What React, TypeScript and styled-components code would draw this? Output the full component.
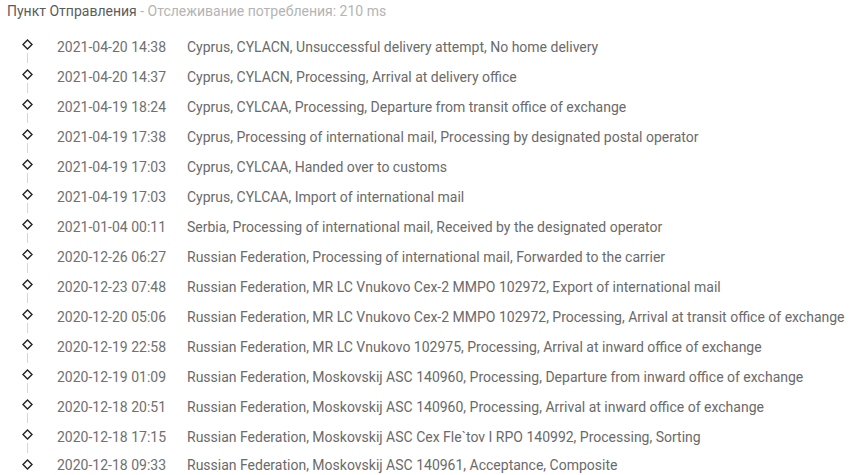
import { FC } from "react";
import styled, { createGlobalStyle } from "styled-components";

const GlobalStyle = createGlobalStyle`
  body {
    margin: 0;
    background: #ffffff;
    font-family: Roboto, "Liberation Sans", Arial, sans-serif;
  }
`;

const Page = styled.div`
  width: 863px;
  height: 475px;
  overflow: hidden;
  background: #fff;
`;

const Title = styled.div`
  padding: 3px 7px 0;
  height: 30px;
  box-sizing: border-box;
  font-size: 14px;
  line-height: 17px;
  color: #5c5c5c;

  & .muted {
    color: #b4b4b4;
  }
`;

const List = styled.ul`
  list-style: none;
  margin: 0;
  padding: 0;
`;

const Row = styled.li`
  display: grid;
  grid-template-columns: 57px 130px 1fr;
  height: 30px;
  align-items: center;
  font-size: 14px;
  white-space: nowrap;
`;

const Marker = styled.div<{ last?: boolean }>`
  align-self: stretch;
  display: flex;
  flex-direction: column;
  align-items: center;
  padding-top: 9px;
  padding-right: 2px;

  & svg {
    display: block;
    flex: none;
  }

  &::after {
    content: "";
    display: ${(p) => (p.last ? "none" : "block")};
    width: 1px;
    height: 10px;
    margin-top: 3px;
    background: #d6d6d6;
  }
`;

const Date = styled.span`
  color: #707070;
`;

const Text = styled.span`
  color: #6a6a6a;
`;

const Diamond: FC = () => (
  <svg width="11" height="11" viewBox="0 0 11 11">
    <polygon
      points="5.5,1 10,5.5 5.5,10 1,5.5"
      fill="#fff"
      stroke="#222"
      strokeWidth="1.4"
    />
  </svg>
);

const events: [string, string][] = [
  ["2021-04-20 14:38", "Cyprus, CYLACN, Unsuccessful delivery attempt, No home delivery"],
  ["2021-04-20 14:37", "Cyprus, CYLACN, Processing, Arrival at delivery office"],
  ["2021-04-19 18:24", "Cyprus, CYLCAA, Processing, Departure from transit office of exchange"],
  ["2021-04-19 17:38", "Cyprus, Processing of international mail, Processing by designated postal operator"],
  ["2021-04-19 17:03", "Cyprus, CYLCAA, Handed over to customs"],
  ["2021-04-19 17:03", "Cyprus, CYLCAA, Import of international mail"],
  ["2021-01-04 00:11", "Serbia, Processing of international mail, Received by the designated operator"],
  ["2020-12-26 06:27", "Russian Federation, Processing of international mail, Forwarded to the carrier"],
  ["2020-12-23 07:48", "Russian Federation, MR LC Vnukovo Cex-2 MMPO 102972, Export of international mail"],
  ["2020-12-20 05:06", "Russian Federation, MR LC Vnukovo Cex-2 MMPO 102972, Processing, Arrival at transit office of exchange"],
  ["2020-12-19 22:58", "Russian Federation, MR LC Vnukovo 102975, Processing, Arrival at inward office of exchange"],
  ["2020-12-19 01:09", "Russian Federation, Moskovskij ASC 140960, Processing, Departure from inward office of exchange"],
  ["2020-12-18 20:51", "Russian Federation, Moskovskij ASC 140960, Processing, Arrival at inward office of exchange"],
  ["2020-12-18 17:15", "Russian Federation, Moskovskij ASC Cex Fle`tov I RPO 140992, Processing, Sorting"],
  ["2020-12-18 09:33", "Russian Federation, Moskovskij ASC 140961, Acceptance, Composite"],
];

const App: FC = () => {
  return (
    <Page>
      <GlobalStyle />
      <Title>
        Пункт Отправления <span className="muted">- Отслеживание потребления: 210 ms</span>
      </Title>
      <List>
        {events.map(([date, text], i) => (
          <Row key={i}>
            <Marker last={i === events.length - 1}>
              <Diamond />
            </Marker>
            <Date>{date}</Date>
            <Text>{text}</Text>
          </Row>
        ))}
      </List>
    </Page>
  );
};

export default App;
